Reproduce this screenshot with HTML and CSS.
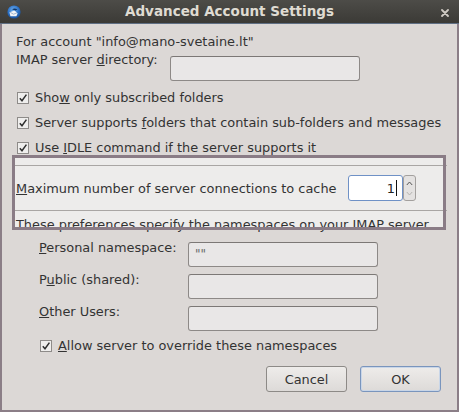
FILE: index.html
```html
<!DOCTYPE html>
<html>
<head>
<meta charset="utf-8">
<link rel="stylesheet" href="styles.css">
</head>
<body>
<div class="window">
  <div class="titlebar">
    <svg class="logo" width="14" height="14" viewBox="0 0 14 14">
      <defs>
        <radialGradient id="g1" cx="0.45" cy="0.35" r="0.7">
          <stop offset="0" stop-color="#6fb0ef"/>
          <stop offset="0.6" stop-color="#2a6fc4"/>
          <stop offset="1" stop-color="#174a8f"/>
        </radialGradient>
      </defs>
      <circle cx="7" cy="7" r="6.6" fill="url(#g1)"/>
      <path d="M2.5 7.2 L7.6 5.6 L10.6 8.4 L9.4 11.2 L3.4 11.2 Z" fill="#f2f4f7"/>
      <path d="M3.2 7.4 L6.6 9.2 L10 7.8" fill="none" stroke="#8fa6c4" stroke-width="0.8"/>
      <path d="M5 4.2 Q7.5 2.6 10.4 4.4 L8.6 5.6 Q7 4.8 5 4.2 Z" fill="#0f3566"/>
    </svg>
    <div class="title">Advanced Account Settings</div>
    <svg class="close" width="8" height="8" viewBox="0 0 8 8">
      <path d="M1 1 L7 7 M7 1 L1 7" stroke="#cfcac3" stroke-width="1.8" stroke-linecap="round"/>
    </svg>
  </div>
  <div class="content">
    <div class="hl-bg"></div>

    <div class="line account">For account "info@mano-svetaine.lt"</div>

    <div class="dir-row">
      <span class="lbl dir-lbl">IMAP server <u>d</u>irectory:</span>
      <div class="entry dir-entry"></div>
    </div>

    <div class="check">
      <span class="cb"><svg width="10" height="10" viewBox="0 0 10 10"><path d="M1.8 5.2 L4 7.8 L8.4 1.6" fill="none" stroke="#2e2e2e" stroke-width="1.5"/></svg></span>
      <span>Sho<u>w</u> only subscribed folders</span>
    </div>
    <div class="check">
      <span class="cb"><svg width="10" height="10" viewBox="0 0 10 10"><path d="M1.8 5.2 L4 7.8 L8.4 1.6" fill="none" stroke="#2e2e2e" stroke-width="1.5"/></svg></span>
      <span>Server supports <u>f</u>olders that contain sub-folders and messages</span>
    </div>
    <div class="check">
      <span class="cb"><svg width="10" height="10" viewBox="0 0 10 10"><path d="M1.8 5.2 L4 7.8 L8.4 1.6" fill="none" stroke="#2e2e2e" stroke-width="1.5"/></svg></span>
      <span>Use <u>I</u>DLE command if the server supports it</span>
    </div>

    <div class="max-row">
      <span><u>M</u>aximum number of server connections to cache</span>
      <div class="spin">
        <div class="spin-entry">1<span class="caret"></span></div>
        <div class="spin-btns">
          <svg width="7" height="5" viewBox="0 0 7 5"><path d="M0.8 4 L3.5 1 L6.2 4" fill="none" stroke="#555" stroke-width="1"/></svg>
          <svg width="7" height="5" viewBox="0 0 7 5"><path d="M0.8 1 L3.5 4 L6.2 1" fill="none" stroke="#b5b3b1" stroke-width="1"/></svg>
        </div>
      </div>
    </div>

    <div class="line prefs">These preferences specify the namespaces on your IMAP server</div>

    <div class="ns-grid">
      <span class="lbl"><u>P</u>ersonal namespace:</span>
      <div class="entry"><span class="quotes">""</span></div>
      <span class="lbl">P<u>u</u>blic (shared):</span>
      <div class="entry"></div>
      <span class="lbl"><u>O</u>ther Users:</span>
      <div class="entry"></div>
    </div>

    <div class="check allow">
      <span class="cb"><svg width="10" height="10" viewBox="0 0 10 10"><path d="M1.8 5.2 L4 7.8 L8.4 1.6" fill="none" stroke="#2e2e2e" stroke-width="1.5"/></svg></span>
      <span><u>A</u>llow server to override these namespaces</span>
    </div>

    <div class="buttons">
      <button class="btn">Cancel</button>
      <button class="btn ok">OK</button>
    </div>

    <div class="hl-frame"></div>
  </div>
</div>
</body>
</html>
```

FILE: styles.css
```css
html, body {
  margin: 0;
  padding: 0;
}
body {
  width: 459px;
  height: 412px;
  overflow: hidden;
  font-family: "DejaVu Sans", "Noto Sans", sans-serif;
  font-size: 12.9px;
  color: #333333;
}
.window {
  width: 459px;
  height: 412px;
  display: flex;
  flex-direction: column;
}
.titlebar {
  height: 24px;
  box-sizing: border-box;
  background: linear-gradient(#4d4c48, #3b3a36);
  border-bottom: 1px solid #5f6f84;
  display: grid;
  grid-template-columns: 1fr auto 1fr;
  align-items: center;
}
.logo {
  margin-left: 7px;
  margin-top: 1px;
}
.title {
  font-family: "DejaVu Sans", sans-serif;
  font-weight: bold;
  font-size: 13.5px;
  color: #dfdbd2;
  line-height: 16px;
  margin-top: -1px;
}
.close {
  justify-self: end;
  margin-right: 10px;
  margin-top: 2px;
}
.content {
  flex: 1;
  position: relative;
  z-index: 0;
  background: #dcd8d6;
  border: 2px solid #8b7e87;
  border-top: none;
  padding: 10px 16px 0 14px;
  display: flex;
  flex-direction: column;
}
.line {
  line-height: 16px;
  height: 16px;
  white-space: nowrap;
}
.dir-row {
  display: flex;
  align-items: flex-start;
  margin-top: 2px;
  height: 29px;
}
.lbl {
  line-height: 16px;
  white-space: nowrap;
}
.dir-lbl {
  width: 154px;
}
.entry {
  box-sizing: border-box;
  height: 25px;
  background: #e9e7e7;
  border: 1px solid #8d8987;
  border-top-color: #7c7876;
  border-radius: 3px;
}
.dir-entry {
  width: 190px;
  margin-top: 4px;
}
.check {
  display: flex;
  align-items: center;
  height: 25px;
  white-space: nowrap;
}
.dir-row + .check {
  margin-top: 4px;
}
.cb {
  box-sizing: border-box;
  width: 12px;
  height: 12px;
  border: 1px solid #8e8b89;
  background: #efeeed;
  margin-left: 1px;
  margin-right: 6px;
  display: flex;
  align-items: center;
  justify-content: center;
}
.max-row {
  margin: 5px -6px 0 -4px;
  padding-left: 4px;
  height: 46px;
  box-sizing: border-box;
  border-top: 1px solid #a9a6a4;
  border-bottom: 1px solid #a9a6a4;
  display: flex;
  align-items: center;
  white-space: nowrap;
}
.spin {
  margin-left: auto;
  margin-right: 31px;
  display: flex;
  height: 26px;
}
.spin-entry {
  box-sizing: border-box;
  width: 55px;
  height: 26px;
  background: #ffffff;
  border: 1px solid #6f91c6;
  border-radius: 3px;
  display: flex;
  align-items: center;
  justify-content: flex-end;
  padding-right: 5px;
  color: #222;
}
.caret {
  width: 1px;
  height: 16px;
  background: #111;
  margin-left: 1px;
}
.spin-btns {
  box-sizing: border-box;
  width: 13px;
  height: 26px;
  border: 1px solid #a3a09e;
  border-radius: 3px;
  background: #e4e2e1;
  display: flex;
  flex-direction: column;
  align-items: center;
  justify-content: space-around;
  padding: 2px 0;
}
.prefs {
  margin-top: 6px;
}
.ns-grid {
  display: grid;
  grid-template-columns: 149px 190px;
  grid-auto-rows: 25px;
  row-gap: 7px;
  padding-left: 23px;
  margin-top: 9px;
}
.ns-grid .lbl {
  margin-top: -2px;
}
.quotes {
  display: block;
  color: #666;
  font-size: 12px;
  line-height: 14px;
  padding: 4px 0 0 6px;
}
.allow {
  margin-top: 2px;
  padding-left: 23px;
}
.buttons {
  display: flex;
  justify-content: flex-end;
  gap: 13px;
  margin-top: 8px;
}
.btn {
  box-sizing: border-box;
  width: 81px;
  height: 26px;
  font-family: "DejaVu Sans", sans-serif;
  font-size: 12.9px;
  color: #333;
  background: linear-gradient(#eeecea, #dddad8);
  border: 1px solid #8d8a87;
  border-radius: 3px;
  padding: 0;
}
.btn.ok {
  border-color: #7a95bd;
  box-shadow: inset 0 0 0 1px #c9d6e8;
}
.hl-bg {
  position: absolute;
  left: 12px;
  top: 133px;
  width: 430px;
  height: 71px;
  background: #edeceb;
  z-index: -1;
}
.hl-frame {
  position: absolute;
  left: 10px;
  top: 131px;
  width: 434px;
  height: 75px;
  box-sizing: border-box;
  border: 3px solid #8a7c86;
}
```
